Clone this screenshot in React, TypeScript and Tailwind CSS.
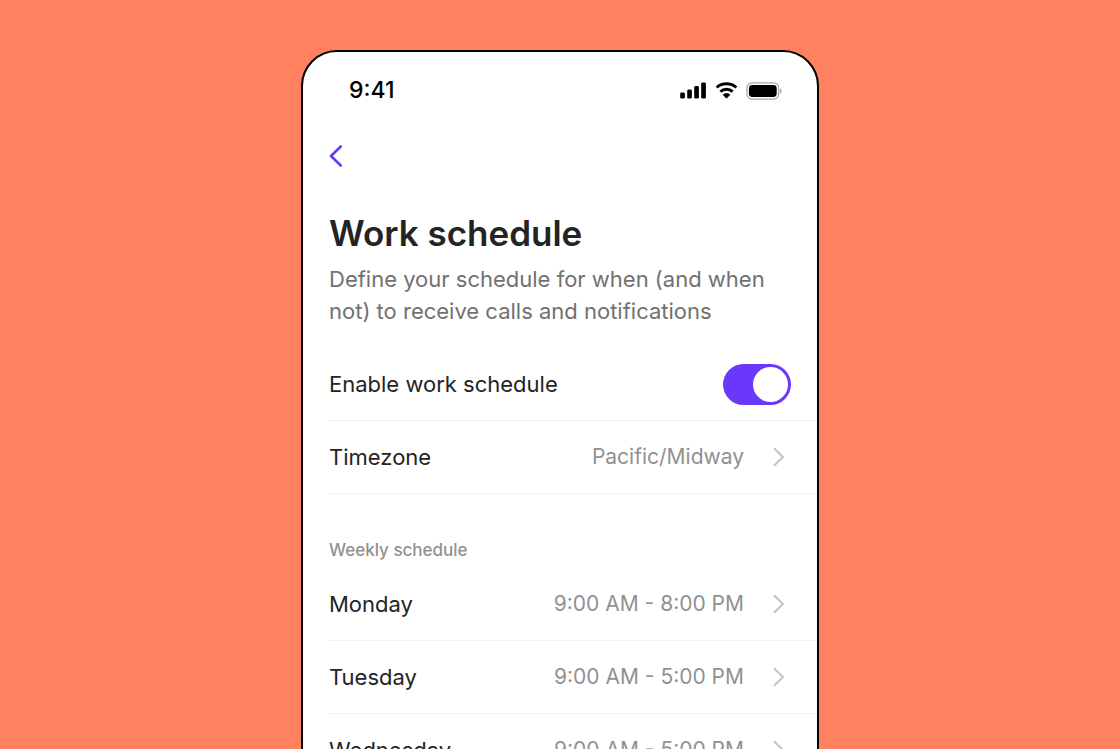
import React, { useState } from 'react';

interface DayHours {
  day: string;
  hours: string;
}

const week: DayHours[] = [
  { day: 'Monday', hours: '9:00 AM - 8:00 PM' },
  { day: 'Tuesday', hours: '9:00 AM - 5:00 PM' },
  { day: 'Wednesday', hours: '9:00 AM - 5:00 PM' },
];

function StatusIcons() {
  return (
    <div className="flex items-center gap-2 text-black">
      {/* Signal */}
      <svg width="27" height="17" viewBox="0 0 27 17" fill="currentColor" aria-hidden="true">
        <rect x="0.2" y="10.4" width="4.7" height="6.2" rx="1.4" />
        <rect x="7.2" y="7.5" width="4.7" height="9.1" rx="1.4" />
        <rect x="14.2" y="4" width="4.7" height="12.6" rx="1.4" />
        <rect x="21.2" y="0.6" width="4.7" height="16" rx="1.4" />
      </svg>
      {/* Wifi */}
      <svg width="23" height="17" viewBox="0 0 23 17" fill="none" stroke="currentColor" aria-hidden="true">
        <path d="M1.700 5.500C7.200 0.600 15.800 0.600 21.300 5.500" strokeWidth="3" />
        <path d="M5.400 9.600c3.400-3.100 8.800-3.100 12.200 0" strokeWidth="3" />
        <path d="M8.200 12.800c1.900-1.600 4.700-1.600 6.600 0l-3.300 3.400z" fill="currentColor" strokeWidth="0.800" strokeLinejoin="round" />
      </svg>
      {/* Battery */}
      <svg width="37" height="18" viewBox="0 0 37 18" fill="none" aria-hidden="true">
        <rect x="0.900" y="0.900" width="31.800" height="16.200" rx="5" stroke="#a6a6a6" strokeWidth="1.200" />
        <rect x="2.900" y="3" width="27.800" height="12" rx="3.400" fill="currentColor" />
        <path d="M34 6.500c1 .5 1.600 1.500 1.600 2.600s-.6 2.100-1.600 2.600z" fill="#a6a6a6" />
      </svg>
    </div>
  );
}

interface LinkRowProps {
  label: string;
  value: string;
}

function LinkRow({ label, value }: LinkRowProps) {
  return (
    <button
      type="button"
      className="flex h-[73px] w-full cursor-pointer items-center border-b border-[#f0f0f0] pr-8 text-left"
    >
      <span className="text-[#242424]">{label}</span>
      <span className="ml-auto text-[21px] text-[#919191]">{value}</span>
      <svg className="ml-7" width="13" height="20" viewBox="0 0 13 20" fill="none" aria-hidden="true">
        <path d="M2.500 1.700l8.500 8.300-8.500 8.300" stroke="#c4c4c4" strokeWidth="2" strokeLinecap="round" strokeLinejoin="round" />
      </svg>
    </button>
  );
}

export default function App() {
  const [enabled, setEnabled] = useState(true);

  return (
    <div className="h-screen overflow-hidden bg-[#ff8160] font-[Inter,sans-serif] text-[22px]">
      <main className="mx-auto mt-[50px] min-h-screen w-full max-w-[518px] rounded-[36px] border-2 border-black bg-white pl-[26px]">
        <div className="flex h-[77px] items-center justify-between pr-[34px] pl-5">
          <span className="text-[23px] font-medium text-black">9:41</span>
          <StatusIcons />
        </div>

        <button type="button" aria-label="Back" className="mt-[15px] block h-6 cursor-pointer">
          <svg width="14" height="24" viewBox="0 0 14 24" fill="none" aria-hidden="true">
            <path d="M11.700 2.500L2 12l9.700 9.500" stroke="#6b38fb" strokeWidth="2.600" strokeLinecap="round" strokeLinejoin="round" />
          </svg>
        </button>

        <header className="mt-[43px] pr-[26px]">
          <h1 className="text-[35px] leading-11 font-semibold text-[#242424]">Work schedule</h1>
          <p className="mt-2 leading-8 text-[#717171]">
            Define your schedule for when (and when not) to receive calls and notifications
          </p>
        </header>

        <label className="mt-[21px] flex h-[73px] cursor-pointer items-center justify-between border-b border-[#f0f0f0] pr-[26px]">
          <span className="text-[#242424]">Enable work schedule</span>
          <input
            type="checkbox"
            role="switch"
            checked={enabled}
            onChange={(e) => setEnabled(e.target.checked)}
            className="flex h-[41px] w-[68px] cursor-pointer appearance-none justify-start rounded-full bg-[#c4c4c4] p-[3px] before:size-[35px] before:rounded-full before:bg-white checked:justify-end checked:bg-[#6b38fb]"
          />
        </label>
        <LinkRow label="Timezone" value="Pacific/Midway" />

        <section>
          <h2 className="mt-11 mb-[6px] text-[17px] leading-6 font-medium text-[#919191]">Weekly schedule</h2>
          {week.map((item) => (
            <LinkRow key={item.day} label={item.day} value={item.hours} />
          ))}
        </section>
      </main>
    </div>
  );
}
